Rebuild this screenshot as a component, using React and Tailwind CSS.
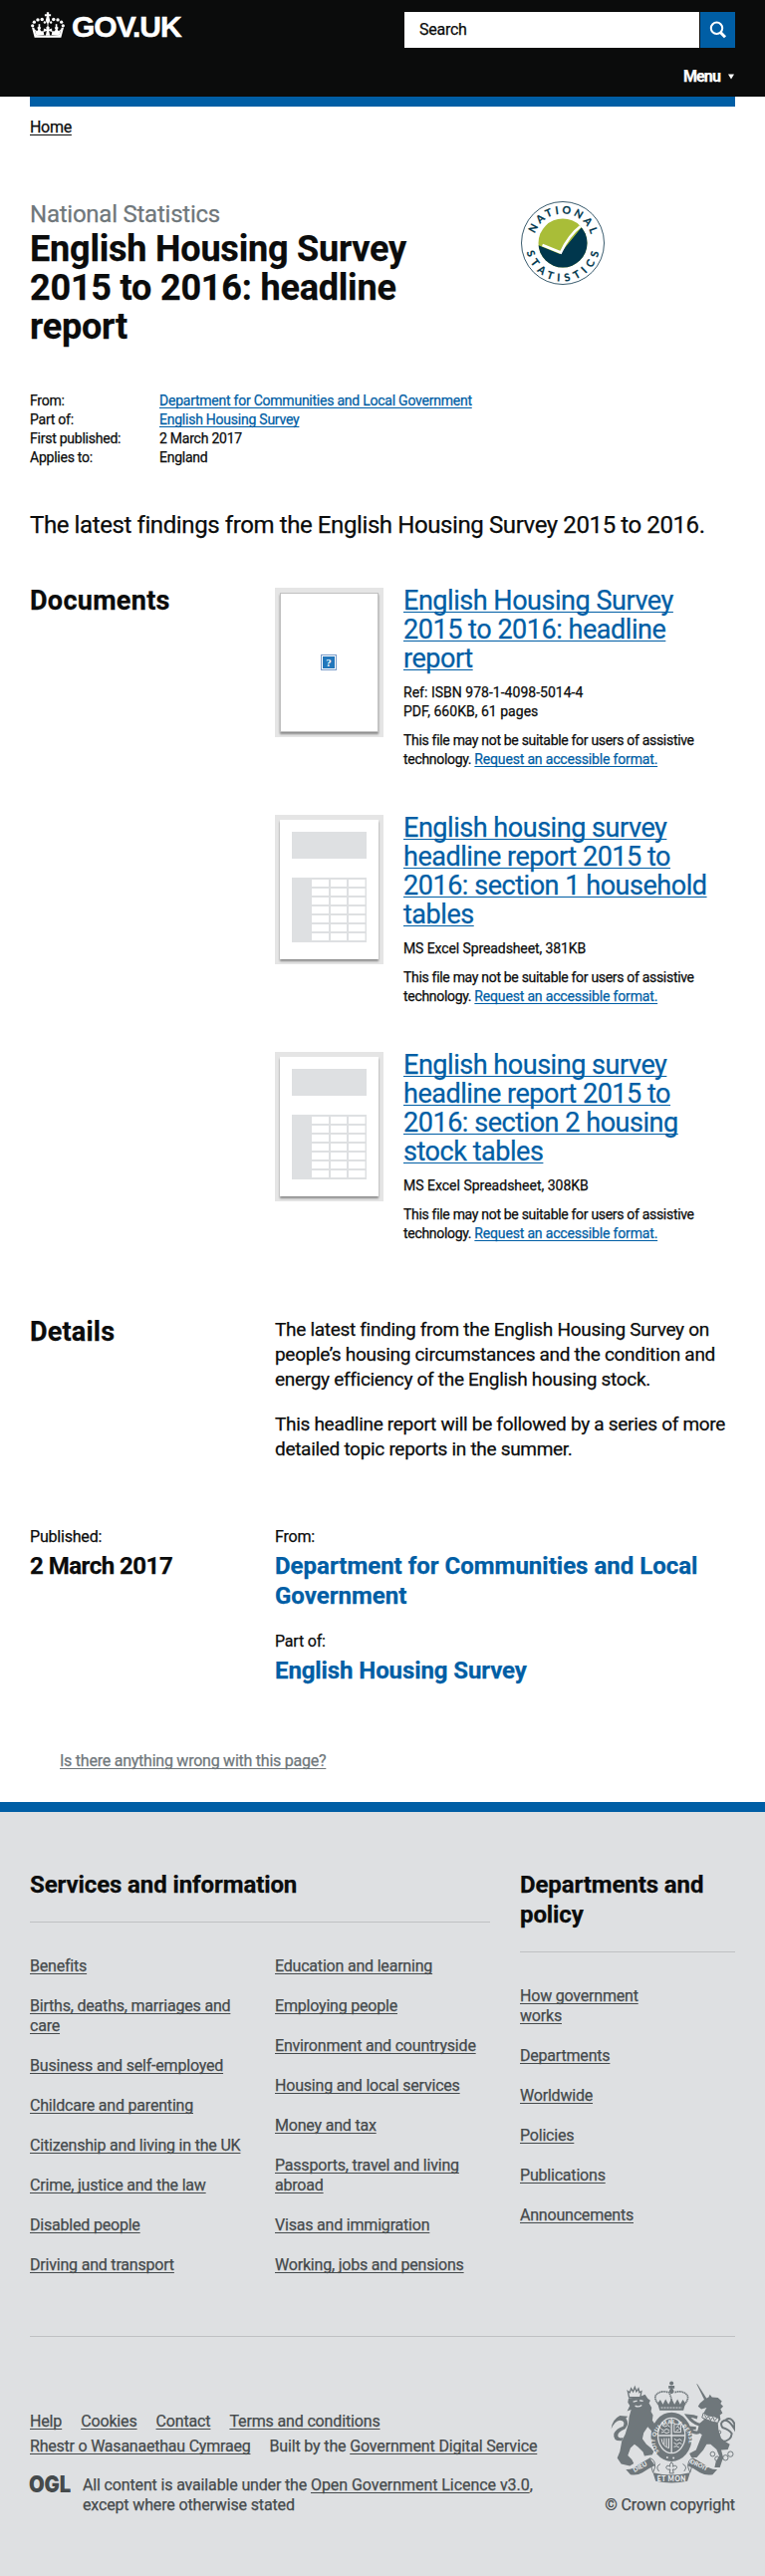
import React from "react";

const LINK = "underline decoration-1 underline-offset-[2px] [text-decoration-skip-ink:none]";

const DOCUMENTS = [
  {
    title: ["English Housing Survey", "2015 to 2016: headline", "report"],
    meta: [
      { text: "Ref: ISBN 978-1-4098-5014-4", cls: "tracking-[0.02px]" },
      { text: "PDF, 660KB, 61 pages", cls: "tracking-[0.02px]" },
    ],
    pdf: true,
  },
  {
    title: ["English housing survey", "headline report 2015 to", "2016: section 1 household", "tables"],
    meta: [{ text: "MS Excel Spreadsheet, 381KB", cls: "tracking-[-0.1px]" }],
  },
  {
    title: ["English housing survey", "headline report 2015 to", "2016: section 2 housing", "stock tables"],
    meta: [{ text: "MS Excel Spreadsheet, 308KB", cls: "tracking-[0px]" }],
  },
];

const SERVICES_A = [
  ["Benefits"],
  ["Births, deaths, marriages and", "care"],
  ["Business and self-employed"],
  ["Childcare and parenting"],
  ["Citizenship and living in the UK"],
  ["Crime, justice and the law"],
  ["Disabled people"],
  ["Driving and transport"],
];
const SERVICES_B = [
  ["Education and learning"],
  ["Employing people"],
  ["Environment and countryside"],
  ["Housing and local services"],
  ["Money and tax"],
  ["Passports, travel and living", "abroad"],
  ["Visas and immigration"],
  ["Working, jobs and pensions"],
];
const DEPARTMENTS = [
  ["How government", "works"],
  ["Departments"],
  ["Worldwide"],
  ["Policies"],
  ["Publications"],
  ["Announcements"],
];

function Lines({ lines }) {
  return lines.map((line, i) => (
    <React.Fragment key={line}>
      {i > 0 && <br />}
      {line}
    </React.Fragment>
  ));
}

function Crown() {
  const side = (
    <g>
      <circle cx="38" cy="78" r="5" />
      <circle cx="43" cy="67" r="5" />
      <circle cx="54" cy="60" r="5.2" />
      <circle cx="67" cy="59" r="5.2" />
      <circle cx="75" cy="68" r="3.6" />
      <path d="M36 84 L44 114 L85 114 L85 108 L49 106 L43 84 Z" />
      <path d="M44 88 Q51 98 55 90 L52 84 L58 80 L64 84 L61 90 Q65 99 71 92 L73 106 L49 106 Z" />
      <path d="M56 73 H61 V82 H56 Z" />
    </g>
  );
  return (
    <svg className="h-[26px] w-[36px]" viewBox="31 36 107 79" fill="#fff">
      {side}
      <g transform="translate(169 0) scale(-1 1)">{side}</g>
      <path d="M81 37 H88 V43 H94 V49 H88 L91 62 Q90 68 86 72 V78 H83 V72 Q79 68 78 62 L81 49 H75 V43 H81 Z" />
      <path d="M84.5 78 L90 84 L88 89 L97 86 V97 L88 94 L91 108 H78 L81 94 L72 97 V86 L81 89 L79 84 Z" />
    </svg>
  );
}

function StatisticsLogo() {
  return (
    <svg className="h-[86px] w-[86px]" viewBox="-43 -43 86 86">
      <defs>
        <path id="arc-top" d="M-28.5 7.6 A29.5 29.5 0 1 1 28.5 7.6" />
        <path id="arc-bottom" d="M-36.5 -3 A36.8 36.8 0 1 0 36.5 -3" />
        <clipPath id="disc">
          <circle r="24.5" />
        </clipPath>
      </defs>
      <circle r="41.5" fill="#fff" stroke="#24495e" strokeWidth="0.9" />
      <g clipPath="url(#disc)">
        <rect x="-25" y="-25" width="50" height="50" fill="#a9bd38" />
        <path d="M-25 2 L-3 11 L19 -16 L30 -16 V26 H-25 Z" fill="#00374d" />
        <path d="M-20.5 2 L-2 9.5 Q6 -8 18.5 -17.5" fill="none" stroke="#fff" strokeWidth="2.6" />
      </g>
      <g fill="#00374d" stroke="#00374d" strokeWidth="0.2" fontFamily="Lato, sans-serif" fontWeight="700" fontSize="10.6">
        <text textAnchor="middle" letterSpacing="2.9">
          <textPath href="#arc-top" startOffset="51.5%">NATIONAL</textPath>
        </text>
        <text textAnchor="middle" letterSpacing="5">
          <textPath href="#arc-bottom" startOffset="52%">STATISTICS</textPath>
        </text>
      </g>
    </svg>
  );
}

function SpreadsheetThumb() {
  const rows = [0, 1, 2, 3, 4, 5, 6];
  return (
    <svg className="block h-[140px] w-[99px]" viewBox="0 0 99 140">
      <rect width="99" height="140" fill="#fff" />
      <rect x="12" y="12" width="75" height="27" fill="#dee0e2" />
      <rect x="12" y="58" width="75" height="65" fill="#dee0e2" />
      {rows.map((r) => (
        <g key={r} fill="#fff">
          <rect x="32" y={60 + r * 9} width="17" height="7" />
          <rect x="51" y={60 + r * 9} width="16" height="7" />
          <rect x="69" y={60 + r * 9} width="16.5" height="7" />
        </g>
      ))}
    </svg>
  );
}

function MissingThumb() {
  return (
    <div className="flex h-[140px] w-[99px] items-center justify-center border border-[#c0c0c0] bg-white">
      <svg className="mr-[2px] h-4 w-4" viewBox="0 0 16 16">
        <rect x="0.5" y="0.5" width="15" height="15" fill="#fff" stroke="#7a9cc9" />
        <rect x="2" y="2" width="12" height="12" fill="#2277bb" />
        <text x="8" y="12" textAnchor="middle" fontSize="11" fontWeight="700" fill="#fff" fontFamily="Liberation Serif, serif">
          ?
        </text>
      </svg>
    </div>
  );
}

function RoyalArms() {
  return (
    <svg className="h-[103px] w-[125px]" viewBox="38 31 376 309" fill="#6f777b">
      <defs>
        <path id="garter" d="M185 245 A51 51 0 1 1 262 245" />
        <path id="dieu" d="M110 307 L158 281" />
        <path id="droit" d="M277 279 L335 306" />
      </defs>
      {/* lion */}
      <path d="M90 62 l6 4 4 -12 6 9 5 -13 5 13 6 -9 3 12 6 -3 -3 17 -34 1 Z" fill="none" stroke="#6f777b" strokeWidth="4" />
      <path d="M92 84 L128 78 L142 72 L150 84 L158 90 L154 98 L162 112 L160 124 L166 134 L164 150 L172 162 L176 190 L168 196 L160 180 L150 170 L138 188 L134 206 L146 222 L160 234 L168 244 L164 254 L140 258 L136 246 L120 230 L110 222 L98 234 L90 256 L102 268 L108 280 L96 288 L70 282 L58 264 L66 244 L72 212 L82 192 L92 160 L94 140 L100 118 L88 122 L96 106 L90 96 Z" />
      <path d="M106 94 l12 -3 M126 90 l10 2 M112 106 q10 6 20 -2" stroke="#dee0e2" strokeWidth="4" fill="none" />
      <path d="M72 212 Q44 214 48 190 Q56 174 76 168 Q84 152 66 150 Q50 152 40 176 Q42 148 66 136 L90 138 L84 144 Q96 158 82 176 Q58 186 60 198 Q64 206 76 202 Z" />
      {/* unicorn */}
      <path d="M297 39 L301 42 L328 84 L322 90 Z" />
      <path d="M308 98 L322 86 L334 80 L338 72 L344 80 L362 82 L374 92 L370 100 L378 108 L370 116 L376 128 L368 134 L370 148 L362 158 L364 180 L372 204 L384 214 L398 222 L392 238 L372 240 L378 262 L368 292 L352 292 L356 274 L366 258 L358 238 L340 222 L328 222 L318 240 L298 262 L282 262 L276 250 L296 240 L306 214 L314 194 L300 184 L306 160 L320 148 L318 130 L328 112 L312 116 L302 108 Z" />
      <path d="M318 128 L332 136 L350 138 L366 144 L362 158 L344 154 L314 142 Z" stroke="#6f777b" strokeWidth="3" fill="#dee0e2" />
      <path d="M322 134 l6 10 6 -6 6 12 7 -10 5 12 8 -10" fill="none" stroke="#6f777b" strokeWidth="3" />
      <path d="M308 164 Q286 158 270 136 L288 138 L300 142 M306 186 Q286 192 276 172 L296 174" fill="none" stroke="#6f777b" strokeWidth="9" />
      <path d="M376 214 Q402 212 404 190 Q396 178 376 172 Q366 156 382 150 Q396 148 412 176 L412 160 Q402 138 386 148" fill="none" stroke="#6f777b" strokeWidth="6" />
      <g fill="none" stroke="#6f777b" strokeWidth="3">
        <circle cx="366" cy="186" r="5" />
        <circle cx="346" cy="252" r="7" />
        <circle cx="360" cy="266" r="7" />
        <circle cx="385" cy="263" r="8" />
        <circle cx="400" cy="252" r="8" />
        <circle cx="372" cy="264" r="5" />
      </g>
      {/* crown */}
      <g>
        <circle cx="222" cy="38" r="6" />
        <path d="M213 46 h18 v8 h-6 v16 h-6 V54 h-6 Z" />
        <circle cx="222" cy="62" r="7" />
      </g>
      <g fill="none" stroke="#6f777b" strokeWidth="5" strokeDasharray="4 1.5">
        <path d="M186 106 Q166 84 176 72 Q192 58 214 66 Q222 78 222 98" />
        <path d="M258 106 Q278 84 268 72 Q252 58 230 66" />
      </g>
      <path d="M180 98 L188 88 L196 102 L204 86 L213 102 L222 84 L231 102 L240 86 L248 102 L256 88 L264 98 L258 120 H186 Z" />
      <path d="M190 112 h64" stroke="#dee0e2" strokeWidth="3" strokeDasharray="6 3" />
      {/* garter and shield */}
      <ellipse cx="222" cy="200" rx="62" ry="74" />
      <ellipse cx="222" cy="196" rx="43" ry="55" fill="#dee0e2" />
      <ellipse cx="222" cy="196" rx="39" ry="51" />
      <path d="M222 145 v102 M183 196 h78" stroke="#dee0e2" strokeWidth="4" />
      <g fill="none" stroke="#dee0e2" strokeWidth="3">
        <path d="M194 164 l8 5 9 -4 6 5 M190 176 l9 5 8 -5 9 5 M191 187 l8 -2 8 4 9 -4" />
        <path d="M230 162 h20 v24 h-20 Z M236 172 l5 -5 4 7 5 4 M236 182 l8 -4" />
        <path d="M192 206 q2 22 22 28 M200 204 v20 M207 204 v26 M214 204 v30" />
        <path d="M230 206 l8 5 9 -4 6 5 M229 218 l9 5 8 -5 7 4 M229 230 l8 -2 8 4" />
      </g>
      <g fill="#eceeef" fontFamily="Lato, sans-serif" fontWeight="900">
        <text fontSize="17" letterSpacing="1">
          <textPath href="#garter" startOffset="0">SOIT QUI MAL Y PENSE</textPath>
        </text>
      </g>
      <circle cx="209" cy="262" r="3" fill="#dee0e2" />
      <circle cx="228" cy="264" r="3" fill="#dee0e2" />
      {/* motto ribbon */}
      <path d="M84 298 Q104 300 122 284 L156 264 L172 286 Q150 296 134 308 Q118 318 98 314 Z" />
      <path d="M360 298 Q340 300 322 284 L288 264 L270 286 Q292 296 308 308 Q326 318 346 314 Z" />
      <path d="M156 264 Q174 268 172 292 L166 308 Q160 292 160 278 M184 304 Q172 290 188 282" fill="none" stroke="#6f777b" strokeWidth="3" />
      <path d="M288 264 Q270 268 272 292 L278 308 Q284 292 284 278 M260 304 Q272 290 256 282" fill="none" stroke="#6f777b" strokeWidth="3" />
      <path d="M166 308 Q222 322 278 308 L270 334 Q222 344 174 334 Z" />
      <path d="M222 276 q8 8 4 14 q12 -8 12 4 q-4 8 -12 4 l2 12 h-12 l2 -12 q-8 4 -12 -4 q0 -12 12 -4 q-4 -6 4 -14 Z" fill="none" stroke="#6f777b" strokeWidth="3" />
      <g fill="#eceeef" fontFamily="Lato, sans-serif" fontWeight="900" fontSize="20">
        <text fontSize="19"><textPath href="#dieu">DIEU</textPath></text>
        <text fontSize="18"><textPath href="#droit">DROIT</textPath></text>
        <text x="222" y="333" textAnchor="middle" textLength="86">ET MON</text>
      </g>
    </svg>
  );
}

function Document({ doc }) {
  return (
    <section className="flex">
      <div className="mt-[7px] ml-[5px] h-[140px] w-[99px] shrink-0 shadow-[0_2px_2px_rgba(0,0,0,0.4),0_0_0_5px_rgba(0,0,0,0.1)]">
        {doc.pdf ? <MissingThumb /> : <SpreadsheetThumb />}
      </div>
      <div className="ml-[25px] pt-px whitespace-nowrap">
        <h3 className="text-[27px] leading-[29px] tracking-[-0.46px] text-[#005ea5]">
          <a className={LINK}><Lines lines={doc.title} /></a>
        </h3>
        <div className="mt-[10px] text-sm leading-[19px]">
          {doc.meta.map((m) => (
            <p key={m.text} className={m.cls}>{m.text}</p>
          ))}
        </div>
        <p className="mt-[10px] text-sm leading-[19px] tracking-[-0.31px]">
          This file may not be suitable for users of assistive
          <br />
          technology. <a className={`${LINK} tracking-[-0.17px] text-[#005ea5]`}>Request an accessible format.</a>
        </p>
      </div>
    </section>
  );
}

function LinkList({ items }) {
  return (
    <ul className="flex w-[216px] flex-col gap-5 whitespace-nowrap text-base leading-5 tracking-[-0.2px]">
      {items.map((lines) => (
        <li key={lines[0]}>
          <a className={LINK}><Lines lines={lines} /></a>
        </li>
      ))}
    </ul>
  );
}

export default function App() {
  return (
    <div className="h-[2586px] w-[768px] overflow-hidden bg-white font-['Roboto',sans-serif] text-[#0b0c0c] [-webkit-text-stroke:0.25px]">
      <header className="h-[97px] bg-[#0b0c0c] px-[30px] pt-3 text-white">
        <div className="flex justify-between">
          <div className="flex items-start gap-[6px]">
            <Crown />
            <span className="font-['Liberation_Sans',sans-serif] text-[30px] leading-[30px] font-bold tracking-[-1px] [-webkit-text-stroke:0.5px]">GOV.UK</span>
          </div>
          <div className="flex h-9 gap-px">
            <div className="w-[296px] bg-white pl-[15px] text-base leading-9 tracking-[-0.25px] text-[#0b0c0c]">Search</div>
            <div className="flex w-[35px] items-center justify-center bg-[#005ea5]">
              <svg className="h-5 w-5" viewBox="0 0 20 20" fill="none" stroke="#fff">
                <circle cx="8.5" cy="8.3" r="5.7" strokeWidth="2" />
                <path d="M12.3 12.5 L17 17.3" strokeWidth="3" />
              </svg>
            </div>
          </div>
        </div>
        <div className="mt-[19px] flex items-center justify-end text-base leading-5 font-bold tracking-[-0.9px]">
          Menu
          <svg className="mr-[1px] ml-2 h-[6px] w-[6px]" viewBox="0 0 6 6" fill="#fff"><path d="M0 0.5 H6 L3 5.5 Z" /></svg>
        </div>
      </header>
      <div className="mx-[30px] h-[10px] bg-[#005ea5]" />

      <main className="h-[1702px] px-[30px] pt-[11px]">
        <nav className="text-base leading-5 tracking-[-0.3px]"><a className={LINK}>Home</a></nav>

        <div className="mt-[62px] flex h-[193px]">
          <div className="w-[492px] whitespace-nowrap">
            <p className="text-2xl leading-[30px] tracking-[-0.24px] text-[#6f777b]">National Statistics</p>
            <h1 className="mt-px text-4xl leading-[39px] font-bold tracking-[-0.2px]">
              English Housing Survey<br />2015 to 2016: headline<br />report
            </h1>
          </div>
          <div className="mt-px"><StatisticsLogo /></div>
        </div>

        <dl className="grid grid-cols-[130px_1fr] text-sm leading-[19px] tracking-[-0.24px]">
          <dt>From:</dt>
          <dd><a className={`${LINK} text-[#005ea5]`}>Department for Communities and Local Government</a></dd>
          <dt>Part of:</dt>
          <dd><a className={`${LINK} text-[#005ea5]`}>English Housing Survey</a></dd>
          <dt>First published:</dt>
          <dd>2 March 2017</dd>
          <dt>Applies to:</dt>
          <dd>England</dd>
        </dl>

        <p className="mt-[43px] text-2xl leading-[30px] tracking-[-0.4px] whitespace-nowrap">
          The latest findings from the English Housing Survey 2015 to 2016.
        </p>

        <div className="mt-[46px] flex">
          <h2 className="w-[246px] shrink-0 pt-px text-[27px] leading-[29px] font-bold tracking-[0.3px]">Documents</h2>
          <div className="flex flex-col gap-[44px]">
            {DOCUMENTS.map((d) => <Document key={d.title.join(" ")} doc={d} />)}
          </div>
        </div>

        <div className="mt-[74px] flex">
          <h2 className="w-[246px] shrink-0 text-[27px] leading-[30px] font-bold tracking-[0.2px]">Details</h2>
          <div className="flex flex-col gap-5 text-[19px] leading-[25px] tracking-[-0.3px] whitespace-nowrap">
            <p>
              The latest finding from the English Housing Survey on<br />people’s housing circumstances and the condition and<br />energy efficiency of the English housing stock.
            </p>
            <p>
              This headline report will be followed by a series of more<br />detailed topic reports in the summer.
            </p>
          </div>
        </div>

        <div className="mt-[66px] flex whitespace-nowrap">
          <div className="w-[246px] shrink-0">
            <p className="text-base leading-5 tracking-[-0.2px]">Published:</p>
            <p className="mt-1 text-2xl leading-[30px] font-bold tracking-[-0.5px]">2 March 2017</p>
          </div>
          <div>
            <p className="text-base leading-5 tracking-[-0.2px]">From:</p>
            <p className="mt-1 text-2xl leading-[30px] font-bold text-[#005ea5]">Department for Communities and Local<br />Government</p>
            <p className="mt-[21px] text-base leading-5 tracking-[-0.2px]">Part of:</p>
            <p className="mt-1 text-2xl leading-[30px] font-bold tracking-[-0.1px] text-[#005ea5]">English Housing Survey</p>
          </div>
        </div>

        <p className="mt-[66px] ml-[30px] text-base leading-5 tracking-[-0.24px] text-[#6f777b]">
          <a className={LINK}>Is there anything wrong with this page?</a>
        </p>
      </main>

      <footer className="h-[777px] border-t-[10px] border-[#005ea5] bg-[#dee0e2] px-[30px] pt-[58px] text-[#454a4c]">
        <div className="flex h-[468px] gap-[30px]">
          <div className="w-[462px]">
            <h2 className="border-b border-[#bfc1c3] pb-[22px] text-2xl leading-[30px] font-bold tracking-[-0.1px] text-[#0b0c0c]">Services and information</h2>
            <div className="mt-[34px] flex gap-[30px]">
              <LinkList items={SERVICES_A} />
              <LinkList items={SERVICES_B} />
            </div>
          </div>
          <div className="w-[216px]">
            <h2 className="mb-[34px] border-b border-[#bfc1c3] pb-[22px] text-2xl leading-[30px] font-bold tracking-[-0.1px] text-[#0b0c0c]">Departments and<br />policy</h2>
            <LinkList items={DEPARTMENTS} />
          </div>
        </div>

        <div className="flex justify-between border-t border-[#bfc1c3] whitespace-nowrap">
          <div className="pt-[75px] text-base leading-5 tracking-[-0.15px]">
            <div className="flex gap-[19px]">
              <a className={LINK}>Help</a>
              <a className={LINK}>Cookies</a>
              <a className={LINK}>Contact</a>
              <a className={LINK}>Terms and conditions</a>
            </div>
            <div className="mt-[5px] flex gap-[19px]">
              <a className={`${LINK} tracking-[-0.22px]`}>Rhestr o Wasanaethau Cymraeg</a>
              <span>Built by the <a className={LINK}>Government Digital Service</a></span>
            </div>
            <div className="mt-[19px] flex">
              <svg className="mr-[12px] h-5 w-[41px] overflow-visible" viewBox="0 0 41 20">
                <text x="-1" y="17" fontFamily="Inter, sans-serif" fontWeight="900" fontSize="22.5" textLength="42" lengthAdjust="spacingAndGlyphs" fill="#454a4c">OGL</text>
              </svg>
              <p>
                All content is available under the <a className={`${LINK} tracking-[-0.05px]`}>Open Government Licence v3.0</a>,<br />except where otherwise stated
              </p>
            </div>
          </div>
          <div className="flex flex-col items-end pt-[44px] text-base leading-5">
            <RoyalArms />
            <p className="mt-[12px] tracking-[-0.1px]">© Crown copyright</p>
          </div>
        </div>
      </footer>
    </div>
  );
}
